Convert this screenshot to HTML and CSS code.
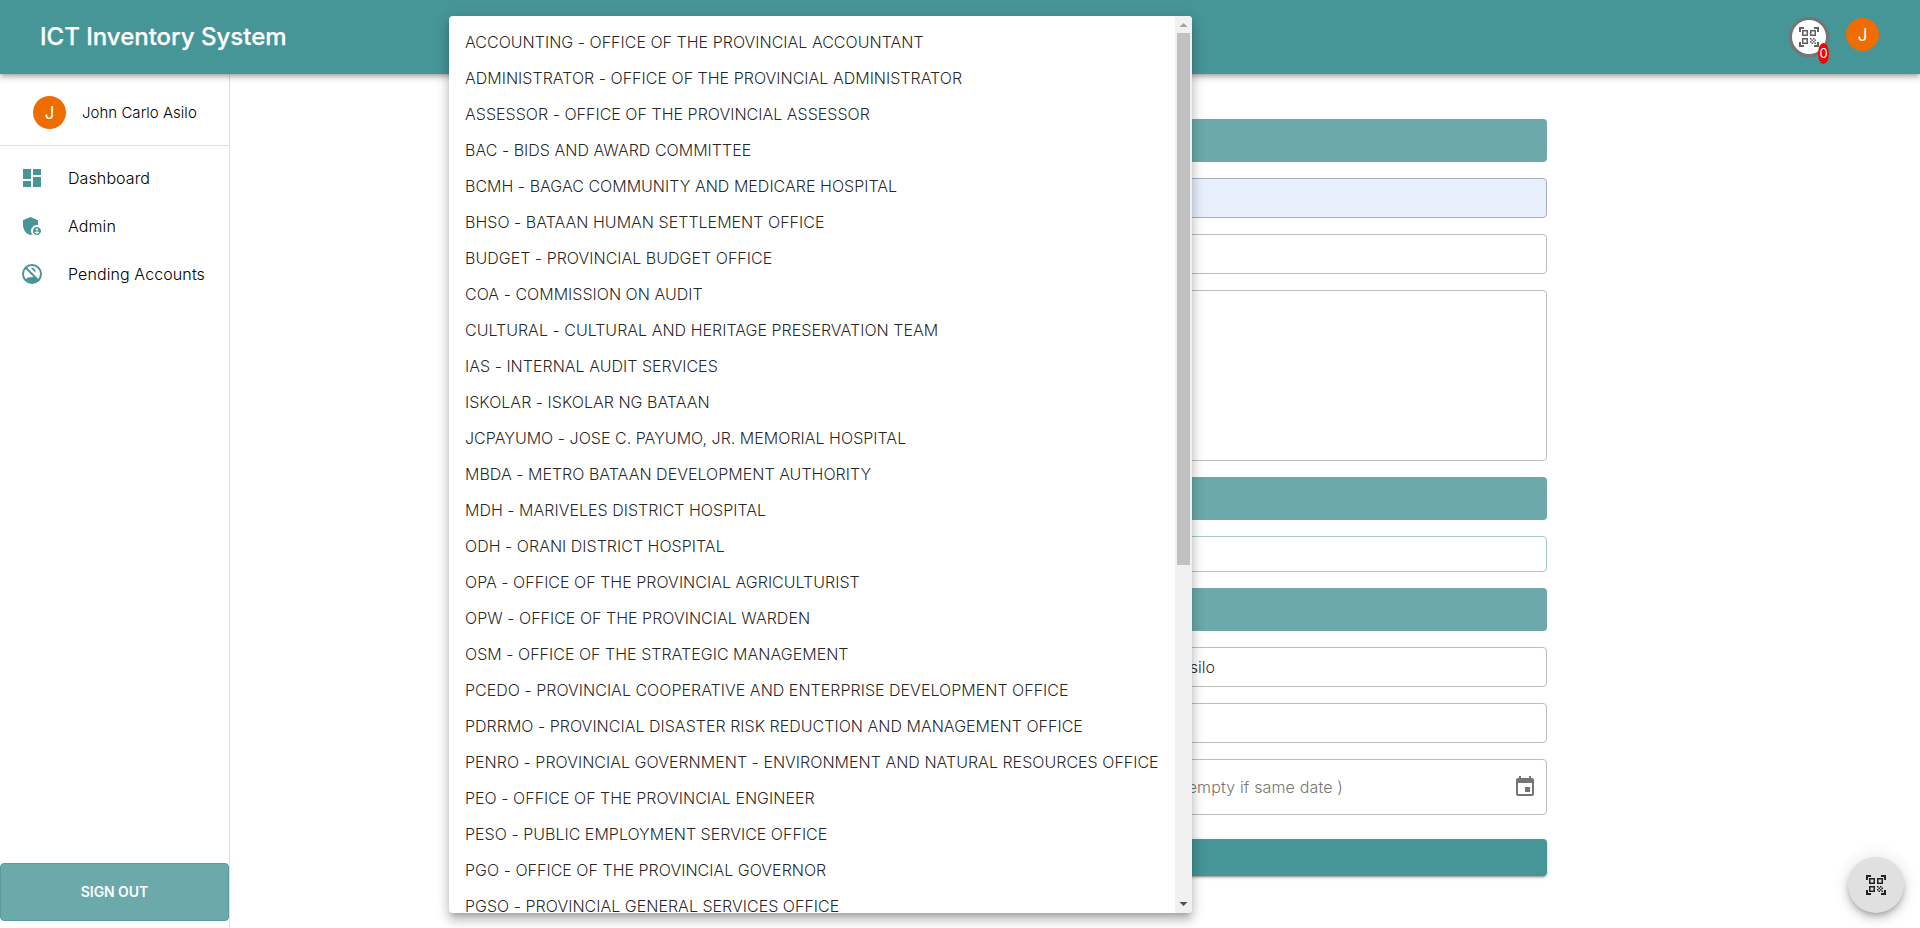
FILE: index.html
```html
<!DOCTYPE html>
<html lang="en">
<head>
<meta charset="utf-8">
<title>ICT Inventory System</title>
<link rel="stylesheet" href="styles.css">
</head>
<body>
<svg width="0" height="0" class="defs">
  <symbol id="qr" viewBox="0 0 24 24"><path d="M9.5 6.5v3h-3v-3h3M11 5H5v6h6V5zm-1.5 9.5v3h-3v-3h3M11 13H5v6h6v-6zm6.5-6.5v3h-3v-3h3M19 5h-6v6h6V5zm-6 8h1.5v1.5H13V13zm1.5 1.5H16V16h-1.5v-1.5zM16 13h1.5v1.5H16V13zm-3 3h1.5v1.5H13V16zm1.5 1.5H16V19h-1.5v-1.5zM16 16h1.5v1.5H16V16zm1.5-1.5H19V16h-1.5v-1.5zm0 3H19V19h-1.5v-1.5zM22 7h-2V4h-3V2h5v5zm0 15v-5h-2v3h-3v2h5zM2 22h5v-2H4v-3H2v5zM2 2v5h2V4h3V2H2z"/></symbol>
</svg>
<header class="topbar">
  <h1 class="brand">ICT Inventory System</h1>
  <div class="actions">
    <button class="scan"><svg class="icon"><use href="#qr"/></svg><span class="badge">0</span></button>
    <div class="avatar">J</div>
  </div>
</header>
<div class="body">
  <aside class="sidebar">
    <div class="user"><div class="avatar">J</div><span>John Carlo Asilo</span></div>
    <nav class="nav">
      <a class="nav-item"><svg class="icon" viewBox="0 0 24 24"><path d="M3 13h8V3H3v10zm0 8h8v-6H3v6zm10 0h8V11h-8v10zm0-18v6h8V3h-8z"/></svg>Dashboard</a>
      <a class="nav-item"><svg class="icon" viewBox="0 0 24 24"><path d="M17 11c.34 0 .67.04 1 .09V6.27L10.5 3 3 6.27v4.91c0 4.54 3.2 8.79 7.5 9.82.55-.13 1.08-.32 1.6-.55-.69-.98-1.1-2.17-1.1-3.45 0-3.31 2.69-6 6-6z"/><path d="M17 13c-2.21 0-4 1.79-4 4s1.79 4 4 4 4-1.79 4-4-1.79-4-4-4zm0 1.38c.62 0 1.12.51 1.12 1.12s-.51 1.12-1.12 1.12-1.12-.51-1.12-1.12.5-1.12 1.12-1.12zm0 5.37c-.93 0-1.74-.46-2.24-1.17.05-.72 1.51-1.08 2.24-1.08s2.19.36 2.24 1.08c-.5.71-1.31 1.17-2.24 1.17z"/></svg>Admin</a>
      <a class="nav-item"><svg class="icon" viewBox="0 0 24 24"><circle cx="12" cy="12" r="9" fill="none" stroke="currentColor" stroke-width="2"/><path d="M5 17.5C7 15.800 9.400 15 12 15c1 0 1.900.1 2.800.35L19 19.200 12 21.500zM10.900 6.100A3.500 3.500 0 0 1 15.400 10.600z"/><path d="M5.200 5.200 18.900 18.900" stroke="currentColor" stroke-width="2"/></svg>Pending Accounts</a>
    </nav>
    <button class="signout">SIGN OUT</button>
  </aside>
  <main class="main">
    <form class="form">
      <div class="section"></div>
      <div class="field filled"></div>
      <div class="field"></div>
      <div class="field area"></div>
      <div class="section"></div>
      <div class="field select"></div>
      <div class="section"></div>
      <div class="field"><span class="value">John Carlo Asilo</span></div>
      <div class="field"></div>
      <div class="field date"><span class="hint">( Leave empty if same date )</span><svg class="icon" viewBox="0 0 24 24"><path d="M17 12h-5v5h5v-5zM16 1v2H8V1H6v2H5c-1.110 0-1.990.9-1.990 2L3 19c0 1.100.89 2 2 2h14c1.100 0 2-.9 2-2V5c0-1.100-.9-2-2-2h-1V1h-2zm3 18H5V8h14v11z"/></svg></div>
      <div class="submit"></div>
    </form>
  </main>
</div>
<div class="menu">
  <ul class="options">
    <li>ACCOUNTING - OFFICE OF THE PROVINCIAL ACCOUNTANT</li>
    <li>ADMINISTRATOR - OFFICE OF THE PROVINCIAL ADMINISTRATOR</li>
    <li>ASSESSOR - OFFICE OF THE PROVINCIAL ASSESSOR</li>
    <li>BAC - BIDS AND AWARD COMMITTEE</li>
    <li>BCMH - BAGAC COMMUNITY AND MEDICARE HOSPITAL</li>
    <li>BHSO - BATAAN HUMAN SETTLEMENT OFFICE</li>
    <li>BUDGET - PROVINCIAL BUDGET OFFICE</li>
    <li>COA - COMMISSION ON AUDIT</li>
    <li>CULTURAL - CULTURAL AND HERITAGE PRESERVATION TEAM</li>
    <li>IAS - INTERNAL AUDIT SERVICES</li>
    <li>ISKOLAR - ISKOLAR NG BATAAN</li>
    <li>JCPAYUMO - JOSE C. PAYUMO, JR. MEMORIAL HOSPITAL</li>
    <li>MBDA - METRO BATAAN DEVELOPMENT AUTHORITY</li>
    <li>MDH - MARIVELES DISTRICT HOSPITAL</li>
    <li>ODH - ORANI DISTRICT HOSPITAL</li>
    <li>OPA - OFFICE OF THE PROVINCIAL AGRICULTURIST</li>
    <li>OPW - OFFICE OF THE PROVINCIAL WARDEN</li>
    <li>OSM - OFFICE OF THE STRATEGIC MANAGEMENT</li>
    <li>PCEDO - PROVINCIAL COOPERATIVE AND ENTERPRISE DEVELOPMENT OFFICE</li>
    <li>PDRRMO - PROVINCIAL DISASTER RISK REDUCTION AND MANAGEMENT OFFICE</li>
    <li>PENRO - PROVINCIAL GOVERNMENT - ENVIRONMENT AND NATURAL RESOURCES OFFICE</li>
    <li>PEO - OFFICE OF THE PROVINCIAL ENGINEER</li>
    <li>PESO - PUBLIC EMPLOYMENT SERVICE OFFICE</li>
    <li>PGO - OFFICE OF THE PROVINCIAL GOVERNOR</li>
    <li>PGSO - PROVINCIAL GENERAL SERVICES OFFICE</li>
  </ul>
  <div class="scrollbar">
    <svg class="arrow" viewBox="0 0 17 17"><path d="M4.500 11l4-4 4 4z" fill="#a3a3a3"/></svg>
    <div class="thumb"></div>
    <svg class="arrow" viewBox="0 0 17 17"><path d="M4.500 6l4 4 4-4z" fill="#505050"/></svg>
  </div>
</div>
<button class="fab"><svg class="icon"><use href="#qr"/></svg></button>
</body>
</html>
```
FILE: styles.css
```css
* { box-sizing: border-box; }
body {
  margin: 0;
  height: 928px;
  overflow: hidden;
  display: flex;
  flex-direction: column;
  background: #fff;
  font-family: Inter, "Liberation Sans", sans-serif;
  font-size: 16px;
  font-weight: 300;
  color: rgba(0, 0, 0, .87);
}
button { font: inherit; border: 0; padding: 0; }
.defs { position: absolute; }
.icon { width: 24px; height: 24px; fill: currentColor; flex: none; }

.topbar {
  position: relative;
  z-index: 1;
  flex: none;
  height: 74px;
  padding: 0 41px 0 40px;
  display: flex;
  align-items: center;
  justify-content: space-between;
  background: #469597;
  box-shadow: 0 2px 4px -1px rgba(0,0,0,.2), 0 4px 5px rgba(0,0,0,.14), 0 1px 10px rgba(0,0,0,.12);
}
.brand { margin: 0; padding-bottom: 2px; font-size: 24px; font-weight: 500; color: #fff; -webkit-text-stroke: .25px #fff; }
.actions { display: flex; align-items: center; gap: 17px; }
.avatar {
  width: 33px;
  height: 33px;
  border-radius: 50%;
  background: #ef6c00;
  color: #fff;
  font-size: 17px;
  font-weight: 400;
  display: flex;
  align-items: center;
  justify-content: center;
}
.actions .avatar { margin-bottom: 5px; }
.user .avatar { padding-top: 1px; }
.scan {
  position: relative;
  width: 40px;
  height: 40px;
  border: 3px solid #757575;
  border-radius: 50%;
  background: #fff;
  color: #616161;
  display: flex;
  align-items: center;
  justify-content: center;
}
.badge {
  position: absolute;
  right: -3px;
  bottom: -10px;
  width: 11px;
  height: 21px;
  border-radius: 50%;
  background: #f00;
  color: #fff;
  font-size: 13px;
  font-weight: 400;
  line-height: 20px;
  text-align: center;
}

.body { flex: 1; display: flex; min-height: 0; }
.sidebar {
  width: 230px;
  flex: none;
  border-right: 1px solid #e0e0e0;
  display: flex;
  flex-direction: column;
  color: #000;
}
.user {
  height: 72px;
  padding: 5px 0 0 33px;
  border-bottom: 1px solid #e0e0e0;
  display: flex;
  align-items: center;
  gap: 16px;
  font-size: 15px;
  letter-spacing: .03px;
}
.nav { padding-top: 8px; display: flex; flex-direction: column; letter-spacing: .1px; }
.nav-item { height: 48px; padding-left: 20px; display: flex; align-items: center; gap: 24px; }
.nav-item .icon { color: #469597; }
.signout {
  height: 58px;
  margin: auto 0 7px;
  padding-bottom: 1px;
  border: 1px solid #5a9c9e;
  border-radius: 4px;
  background: #6ba9ab;
  color: #fff;
  font-size: 14px;
  font-weight: 600;
  letter-spacing: -.08px;
}

.main { flex: 1; padding: 45px 373px 0; }
.form { display: flex; flex-direction: column; gap: 16px; }
.section { height: 43px; border-radius: 4px; background: #6ba9ab; }
.field {
  height: 40px;
  border: 1px solid #bdbdbd;
  border-radius: 4px;
  padding: 0 9px 0 493px;
  display: flex;
  align-items: center;
  justify-content: space-between;
}
.filled { background: #e8f0fe; border-color: #a9aec2; }
.area { height: 171px; }
.select { height: 36px; border-color: #a3cbbf; }
.date { height: 56px; }
.value { width: 118px; display: flex; justify-content: flex-end; white-space: nowrap; }
.hint { width: 246px; display: flex; justify-content: flex-end; white-space: nowrap; color: #757575; letter-spacing: .15px; }
.date .icon { color: #757575; }
.submit {
  height: 37px;
  margin-top: 8px;
  border-radius: 4px;
  background: #469597;
  box-shadow: 0 3px 1px -2px rgba(0,0,0,.2), 0 2px 2px rgba(0,0,0,.14), 0 1px 5px rgba(0,0,0,.12);
}

.menu {
  position: absolute;
  z-index: 2;
  left: 449px;
  top: 16px;
  width: 743px;
  height: 897px;
  border-radius: 4px;
  overflow: hidden;
  display: flex;
  background: #fff;
  box-shadow: 0 5px 5px -3px rgba(0,0,0,.2), 0 8px 10px 1px rgba(0,0,0,.14), 0 3px 14px 2px rgba(0,0,0,.12);
}
.options { flex: 1; margin: 0; padding: 8px 0; list-style: none; }
.options li { height: 36px; padding-left: 16px; line-height: 36px; white-space: nowrap; letter-spacing: .015px; }
.scrollbar {
  width: 17px;
  background: #f1f1f1;
  display: flex;
  flex-direction: column;
  align-items: center;
}
.thumb { width: 13px; height: 532px; background: #c1c1c1; }
.arrow { width: 17px; height: 17px; flex: none; }
.arrow:last-child { margin-top: auto; }

.fab {
  position: absolute;
  right: 16px;
  bottom: 15px;
  width: 56px;
  height: 56px;
  border-radius: 50%;
  background: #e0e0e0;
  color: #212121;
  display: flex;
  align-items: center;
  justify-content: center;
  box-shadow: 0 3px 5px -1px rgba(0,0,0,.2), 0 6px 10px rgba(0,0,0,.14), 0 1px 18px rgba(0,0,0,.12);
}
```
